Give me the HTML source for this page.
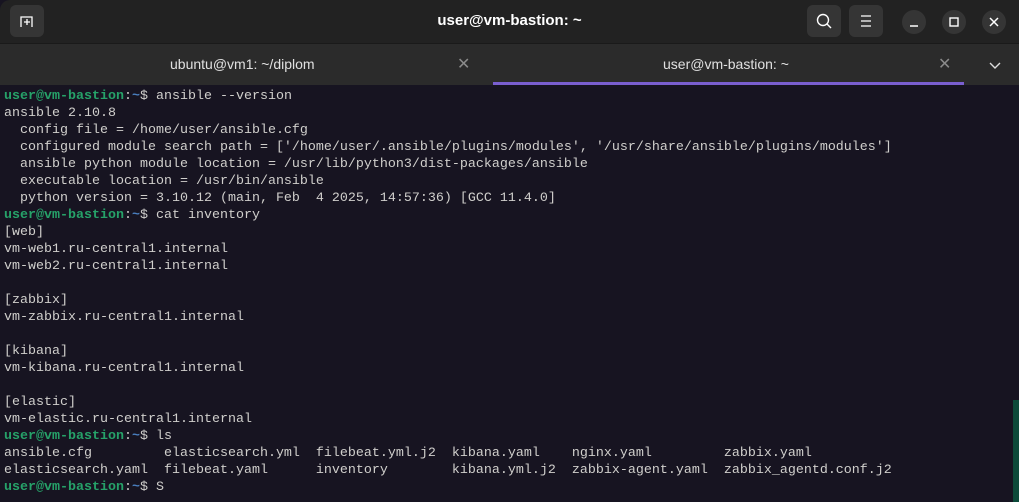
<!DOCTYPE html>
<html><head><meta charset="utf-8"><style>
*{margin:0;padding:0;box-sizing:border-box}
html,body{width:1019px;height:502px;overflow:hidden;background:#171421}
.win{position:absolute;left:0;top:0;width:1019px;height:502px;background:#171421;border-top-left-radius:10px;overflow:hidden}
.hdr{position:absolute;left:0;top:0;width:1019px;height:44px;background:#222222;border-bottom:1px solid #1a1a1a}
.title{position:absolute;left:0;width:1019px;top:12px;text-align:center;color:#fff;font:bold 15px "Liberation Sans",sans-serif}
.btn{position:absolute;top:5px;width:34px;height:32px;background:#353535;border-radius:6px}
.cb{position:absolute;top:10px;width:24px;height:24px;border-radius:50%;background:#353535}
.tabs{position:absolute;left:0;top:44px;width:1019px;height:41px;background:#2b2b2b}
.tab{position:absolute;top:12px;color:#e0e0e0;font:14px "Liberation Sans",sans-serif}
.x{position:absolute;top:10px;color:#8a8a8a;font:16px "Liberation Sans",sans-serif}
.ul{position:absolute;left:493px;top:82px;width:471px;height:3px;background:#7a5fd0}
pre{position:absolute;left:4px;top:88px;font:13.33px/17px "Liberation Mono",monospace;color:#d0cfcc}
.g{color:#26a269;font-weight:bold}.b{color:#4a7fbf;font-weight:bold}
.edge{position:absolute;left:1013px;top:400px;width:6px;height:102px;background:#0d4a3a}
</style></head><body><div class="win">
<div class="hdr">
<div class="btn" style="left:10px;"><svg width="34" height="32"><path d="M11 22V12h11v10M14 17h6M17 14v6" stroke="#fff" stroke-width="1.3" fill="none"/></svg></div>
<div class="title">user@vm-bastion: ~</div>
<div class="btn" style="left:807px"><svg width="34" height="32"><circle cx="16" cy="15" r="5.5" stroke="#fff" stroke-width="1.4" fill="none"/><path d="M20 19l4 4" stroke="#fff" stroke-width="1.4"/></svg></div>
<div class="btn" style="left:849px"><svg width="34" height="32"><path d="M12 11h10M12 16h10M12 21h10" stroke="#fff" stroke-width="1.3"/></svg></div>
<div class="cb" style="left:902px"><svg width="24" height="24"><path d="M8 16h8" stroke="#fff" stroke-width="1.5"/></svg></div>
<div class="cb" style="left:942px"><svg width="24" height="24"><rect x="8" y="8" width="8" height="8" stroke="#fff" stroke-width="1.4" fill="none"/></svg></div>
<div class="cb" style="left:982px"><svg width="24" height="24"><path d="M8 8l8 8M16 8l-8 8" stroke="#fff" stroke-width="1.5"/></svg></div>
</div>
<div class="tabs">
<div class="tab" style="left:170px">ubuntu@vm1: ~/diplom</div>
<div class="x" style="left:457px">✕</div>
<div class="tab" style="left:663px">user@vm-bastion: ~</div>
<div class="x" style="left:938px">✕</div>
<svg style="position:absolute;left:988px;top:17px" width="14" height="10"><path d="M2 2l5 5 5-5" stroke="#ddd" stroke-width="1.4" fill="none"/></svg>
</div>
<div class="ul"></div>
<pre><span class="g">user@vm-bastion</span>:<span class="b">~</span>$ ansible --version
ansible 2.10.8
  config file = /home/user/ansible.cfg
  configured module search path = ['/home/user/.ansible/plugins/modules', '/usr/share/ansible/plugins/modules']
  ansible python module location = /usr/lib/python3/dist-packages/ansible
  executable location = /usr/bin/ansible
  python version = 3.10.12 (main, Feb  4 2025, 14:57:36) [GCC 11.4.0]
<span class="g">user@vm-bastion</span>:<span class="b">~</span>$ cat inventory
[web]
vm-web1.ru-central1.internal
vm-web2.ru-central1.internal

[zabbix]
vm-zabbix.ru-central1.internal

[kibana]
vm-kibana.ru-central1.internal

[elastic]
vm-elastic.ru-central1.internal
<span class="g">user@vm-bastion</span>:<span class="b">~</span>$ ls
ansible.cfg         elasticsearch.yml  filebeat.yml.j2  kibana.yaml    nginx.yaml         zabbix.yaml
elasticsearch.yaml  filebeat.yaml      inventory        kibana.yml.j2  zabbix-agent.yaml  zabbix_agentd.conf.j2
<span class="g">user@vm-bastion</span>:<span class="b">~</span>$ S</pre>
<div class="edge"></div>
</div></body></html>
